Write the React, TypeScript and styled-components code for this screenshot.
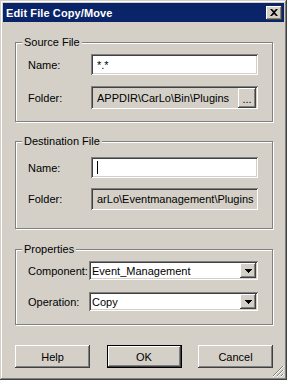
import React from "react";
import styled, { createGlobalStyle } from "styled-components";

const GlobalStyle = createGlobalStyle`
  html, body {
    margin: 0;
    padding: 0;
    background: #d4d0c8;
  }
  body {
    font-family: "Liberation Sans", Arial, sans-serif;
    font-size: 11px;
  }
`;

const Window = styled.div`
  position: relative;
  width: 287px;
  height: 380px;
  box-sizing: border-box;
  padding: 3px;
  background: #d4d0c8;
  box-shadow: inset -1px -1px 0 #404040, inset 1px 1px 0 #d4d0c8,
    inset -2px -2px 0 #808080, inset 2px 2px 0 #ffffff;
  display: flex;
  flex-direction: column;
  color: #000;
`;

const TitleBar = styled.div`
  height: 19px;
  background: #0a246a;
  display: flex;
  align-items: center;
  justify-content: space-between;
  padding: 0 2px 0 3px;
`;

const Title = styled.span`
  color: #fff;
  font-weight: bold;
  font-size: 11px;
  letter-spacing: 0.1px;
`;

const CloseButton = styled.div`
  width: 16px;
  height: 14px;
  box-sizing: border-box;
  background: #d4d0c8;
  box-shadow: inset -1px -1px 0 #404040, inset 1px 1px 0 #ffffff,
    inset -2px -2px 0 #808080;
  display: flex;
  align-items: center;
  justify-content: center;
`;

const Body = styled.div`
  flex: 1;
  display: flex;
  flex-direction: column;
  padding: 0 11px 0 12px;
`;

const Group = styled.fieldset<{ $top: number; $pt: number; $pb: number }>`
  margin: ${(p) => p.$top}px 0 0 0;
  padding: ${(p) => p.$pt}px 14px ${(p) => p.$pb}px 12px;
  border: 1px solid #808080;
  box-shadow: 1px 1px 0 #ffffff, inset 1px 1px 0 #ffffff;
  display: flex;
  flex-direction: column;
  min-width: 0;
`;

const Legend = styled.legend`
  margin-left: -6px;
  padding: 0 2px;
  line-height: 13px;
  background: #d4d0c8;
`;

const Row = styled.div<{ $gap?: number }>`
  display: flex;
  align-items: center;
  margin-top: ${(p) => p.$gap ?? 0}px;
`;

const Label = styled.span<{ $w: number }>`
  width: ${(p) => p.$w}px;
  flex-shrink: 0;
`;

const Field = styled.div<{ $readonly?: boolean; $h: number }>`
  flex: 1;
  height: ${(p) => p.$h}px;
  box-sizing: border-box;
  background: ${(p) => (p.$readonly ? "#d4d0c8" : "#ffffff")};
  box-shadow: inset 1px 1px 0 #808080, inset -1px -1px 0 #ffffff,
    inset 2px 2px 0 #404040, inset -2px -2px 0 #d4d0c8;
  display: flex;
  align-items: center;
  padding: 0 2px 0 6px;
  white-space: nowrap;
  overflow: hidden;
`;

const FieldText = styled.span`
  flex: 1;
  overflow: hidden;
`;

const Caret = styled.span`
  width: 1px;
  height: 13px;
  background: #000;
`;

const SmallButton = styled.div`
  width: 18px;
  height: 20px;
  box-sizing: border-box;
  background: #d4d0c8;
  box-shadow: inset -1px -1px 0 #404040, inset 1px 1px 0 #ffffff,
    inset -2px -2px 0 #808080;
  display: flex;
  align-items: flex-end;
  justify-content: center;
  padding-bottom: 5px;
  font-size: 11px;
  line-height: 8px;
`;

const Combo = styled.div`
  flex: 1;
  height: 19px;
  box-sizing: border-box;
  background: #ffffff;
  box-shadow: inset 1px 1px 0 #808080, inset -1px -1px 0 #ffffff,
    inset 2px 2px 0 #404040, inset -2px -2px 0 #d4d0c8;
  display: flex;
  align-items: center;
  padding: 2px 2px 2px 3px;
`;

const ComboValue = styled.span`
  flex: 1;
`;

const ArrowButton = styled.div`
  width: 16px;
  height: 15px;
  box-sizing: border-box;
  background: #d4d0c8;
  box-shadow: inset -1px -1px 0 #404040, inset 1px 1px 0 #ffffff,
    inset -2px -2px 0 #808080;
  display: flex;
  align-items: center;
  justify-content: center;
`;

const ButtonBar = styled.div`
  display: flex;
  justify-content: space-between;
  margin-top: 20px;
`;

const Button = styled.div<{ $default?: boolean }>`
  width: 75px;
  height: 23px;
  box-sizing: border-box;
  background: #d4d0c8;
  display: flex;
  align-items: center;
  justify-content: center;
  box-shadow: ${(p) =>
    p.$default
      ? "inset 0 0 0 1px #000000, inset -2px -2px 0 #404040, inset 2px 2px 0 #ffffff, inset -3px -3px 0 #808080"
      : "inset -1px -1px 0 #404040, inset 1px 1px 0 #ffffff, inset -2px -2px 0 #808080"};
`;

const Grip = styled.svg`
  position: absolute;
  right: 3px;
  bottom: 3px;
`;

const Arrow = () => (
  <svg width="7" height="4" viewBox="0 0 7 4">
    <path d="M0 0h7v1H0zM1 1h5v1H1zM2 2h3v1H2zM3 3h1v1H3z" fill="#000" />
  </svg>
);

const App = () => {
  return (
    <>
      <GlobalStyle />
      <Window>
        <TitleBar>
          <Title>Edit File Copy/Move</Title>
          <CloseButton>
            <svg width="8" height="7" viewBox="0 0 8 7">
              <path
                d="M0 0h2l2 2 2-2h2L5 3.5 8 7H6L4 5 2 7H0l3-3.5z"
                fill="#000"
              />
            </svg>
          </CloseButton>
        </TitleBar>
        <Body>
          <Group $top={14} $pt={5} $pb={12}>
            <Legend>Source File</Legend>
            <Row>
              <Label $w={63}>Name:</Label>
              <Field $h={21}>
                <FieldText>*.*</FieldText>
              </Field>
            </Row>
            <Row $gap={11}>
              <Label $w={63}>Folder:</Label>
              <Field $h={23} $readonly>
                <FieldText>APPDIR\CarLo\Bin\Plugins</FieldText>
                <SmallButton>...</SmallButton>
              </Field>
            </Row>
          </Group>

          <Group $top={13} $pt={9} $pb={18}>
            <Legend>Destination File</Legend>
            <Row>
              <Label $w={63}>Name:</Label>
              <Field $h={21}>
                <Caret />
              </Field>
            </Row>
            <Row $gap={10}>
              <Label $w={63}>Folder:</Label>
              <Field $h={22} $readonly>
                <FieldText>arLo\Eventmanagement\Plugins</FieldText>
              </Field>
            </Row>
          </Group>

          <Group $top={14} $pt={5} $pb={13}>
            <Legend>Properties</Legend>
            <Row>
              <Label $w={61}>Component:</Label>
              <Combo>
                <ComboValue>Event_Management</ComboValue>
                <ArrowButton>
                  <Arrow />
                </ArrowButton>
              </Combo>
            </Row>
            <Row $gap={12}>
              <Label $w={61}>Operation:</Label>
              <Combo>
                <ComboValue>Copy</ComboValue>
                <ArrowButton>
                  <Arrow />
                </ArrowButton>
              </Combo>
            </Row>
          </Group>

          <ButtonBar>
            <Button>Help</Button>
            <Button $default>OK</Button>
            <Button>Cancel</Button>
          </ButtonBar>
        </Body>
        <Grip width="12" height="12" viewBox="0 0 12 12">
          <path d="M11 1L1 11M11 5L5 11M11 9L9 11" stroke="#808080" strokeWidth="1" />
          <path d="M12 1L1 12M12 5L5 12M12 9L9 12" stroke="#ffffff" strokeWidth="1" />
        </Grip>
      </Window>
    </>
  );
};

export default App;
